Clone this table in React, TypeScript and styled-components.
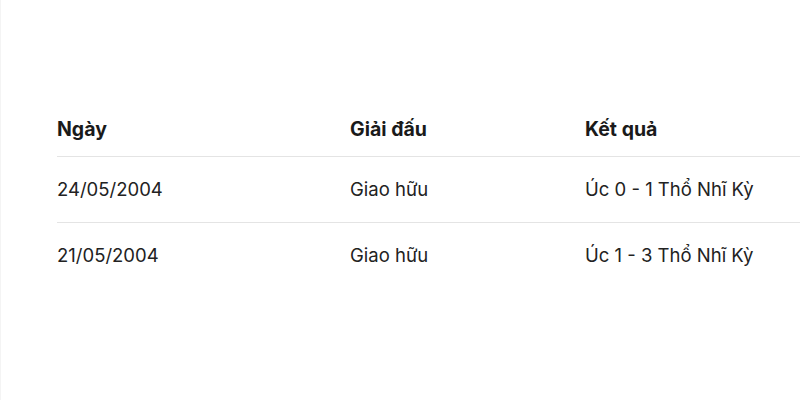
import React from "react";
import styled, { createGlobalStyle } from "styled-components";

const GlobalStyle = createGlobalStyle`
  html, body {
    margin: 0;
    padding: 0;
    background: #ffffff;
  }
  body {
    font-family: "Inter", "Roboto", "Noto Sans", sans-serif;
    color: #1f1f1f;
  }
`;

type Match = {
  date: string;
  league: string;
  result: string;
};

const matches: Match[] = [
  { date: "24/05/2004", league: "Giao hữu", result: "Úc 0 - 1 Thổ Nhĩ Kỳ" },
  { date: "21/05/2004", league: "Giao hữu", result: "Úc 1 - 3 Thổ Nhĩ Kỳ" },
];

function App() {
  return (
    <>
      <GlobalStyle />
      <Page>
        <Table>
          <colgroup>
            <col style={{ width: 293 }} />
            <col style={{ width: 235 }} />
            <col />
          </colgroup>
          <thead>
            <HeadRow>
              <HeadCell>Ngày</HeadCell>
              <HeadCell>Giải đấu</HeadCell>
              <HeadCell>Kết quả</HeadCell>
            </HeadRow>
          </thead>
          <tbody>
            {matches.map((m, i) => (
              <Row key={m.date} $last={i === matches.length - 1}>
                <Cell>{m.date}</Cell>
                <Cell>{m.league}</Cell>
                <Cell>{m.result}</Cell>
              </Row>
            ))}
          </tbody>
        </Table>
      </Page>
    </>
  );
}

const Page = styled.div`
  min-height: 400px;
  box-sizing: border-box;
  padding: 102px 0 0 56px;
  border-left: 1px solid #f4f4f4;
`;

const Table = styled.table`
  width: 100%;
  border-collapse: collapse;
  table-layout: fixed;
`;

const HeadRow = styled.tr`
  height: 54px;
  border-bottom: 1px solid #e4e4e4;
`;

const Row = styled.tr<{ $last?: boolean }>`
  height: 66px;
  border-bottom: ${(p) => (p.$last ? "none" : "1px solid #e4e4e4")};
`;

const HeadCell = styled.th`
  padding: 0;
  text-align: left;
  font-size: 19.5px;
  font-weight: 700;
  color: #1a1a1a;
  vertical-align: middle;
`;

const Cell = styled.td`
  padding: 0;
  font-size: 18.5px;
  font-weight: 400;
  color: #222222;
  vertical-align: middle;
  white-space: nowrap;
`;

export default App;
